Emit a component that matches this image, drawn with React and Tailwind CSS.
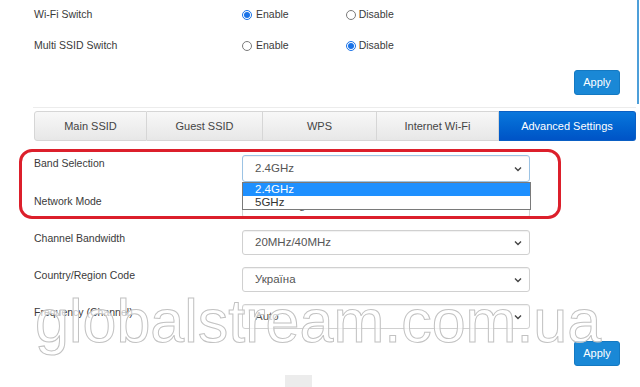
import React from "react";

function Radio({ checked }) {
  if (checked) {
    return (
      <span className="inline-flex h-[10px] w-[10px] items-center justify-center rounded-full border border-[#1a73e8] bg-white">
        <span className="h-[6px] w-[6px] rounded-full bg-[#1a73e8]" />
      </span>
    );
  }
  return <span className="inline-block h-[10px] w-[10px] rounded-full border border-[#7a7a7a] bg-white" />;
}

function Chevron() {
  return (
    <svg width="8" height="6" viewBox="0 0 8 6" className="text-[#444]">
      <polyline points="1,1.5 4,4.5 7,1.5" fill="none" stroke="currentColor" strokeWidth="1.4" />
    </svg>
  );
}

function Select({ value, focused, tall }) {
  return (
    <div
      className={
        "flex w-[288px] items-center justify-between rounded-[3px] border bg-white pl-[12px] pr-[7px] text-[11.5px] text-[#555] shadow-[inset_0_1px_1px_rgba(0,0,0,0.06)] " +
        (tall ? "h-[27px] " : "h-[25px] ") +
        (focused ? "border-[#9cc3e4]" : "border-[#d0d0d0]")
      }
    >
      <span>{value}</span>
      <Chevron />
    </div>
  );
}

function RadioRow({ label, on, h }) {
  return (
    <div className={"flex items-center " + h}>
      <div className="w-[208px] text-[10.5px] text-[#3a3a3a]">{label}</div>
      <div className="flex items-center gap-[4px] text-[10.5px] text-[#3a3a3a]">
        <Radio checked={on} />
        <span>Enable</span>
      </div>
      <div className="ml-[57px] flex items-center gap-[3px] text-[10.5px] text-[#3a3a3a]">
        <Radio checked={!on} />
        <span>Disable</span>
      </div>
    </div>
  );
}

function SelectRow({ label, value, focused, tall, h, children }) {
  return (
    <div className={"flex items-start " + h}>
      <div className="w-[208px] pt-[1px] text-[10.5px] leading-[14px] text-[#3a3a3a]">{label}</div>
      <div className="relative">
        <Select value={value} focused={focused} tall={tall} />
        {children}
      </div>
    </div>
  );
}

const tabs = [
  { name: "Main SSID", w: "w-[113px]" },
  { name: "Guest SSID", w: "w-[116px]" },
  { name: "WPS", w: "w-[114px]" },
  { name: "Internet Wi-Fi", w: "w-[122px]" },
  { name: "Advanced Settings", w: "flex-1", active: true },
];

export default function App() {
  return (
    <div className="relative h-[387px] w-[640px] overflow-hidden bg-white font-['Liberation_Sans',Arial,sans-serif]">
      <div className="absolute right-[1px] top-0 h-[104px] w-[2px] bg-[#4d9fd9]" />

      <div className="pl-[34px]">
        <RadioRow label="Wi-Fi Switch" on={true} h="h-[30px]" />
        <RadioRow label="Multi SSID Switch" on={false} h="h-[32px]" />
      </div>

      <div className="mt-[8px] flex justify-end pr-[20px]">
        <button className="h-[25px] w-[46px] rounded-[3px] border border-[#1479c2] bg-[#1a88d6] text-[11px] text-white">
          Apply
        </button>
      </div>

      <div className="ml-[33px] mr-[4px] mt-[12px] border-t border-[#ececec]" />

      <div className="ml-[34px] mr-[4px] mt-[3px] flex h-[30px]">
        {tabs.map((t, i) => (
          <div
            key={t.name}
            className={
              "flex items-center justify-center border text-[11px] " +
              t.w +
              (i === 0 ? " rounded-l-[3px]" : " border-l-0") +
              (t.active
                ? " rounded-r-[3px] border-[#0a5fc4] bg-gradient-to-b from-[#0b77dc] to-[#0053c6] text-white"
                : " border-[#d6d6d6] bg-gradient-to-b from-[#f8f8f8] to-[#e7e7e7] text-[#444]")
            }
          >
            {t.name}
          </div>
        ))}
      </div>

      <div className="mt-[14px] pl-[34px]">
        <SelectRow label="Band Selection" value="2.4GHz" focused tall h="h-[38px]">
          <div className="absolute left-0 top-[27px] z-10 w-[289px] border border-[#7a7a7a] bg-white text-[11.5px] leading-[13px]">
            <div className="bg-[#1e90ff] pl-[12px] text-white">2.4GHz</div>
            <div className="pl-[12px] text-[#333]">5GHz</div>
          </div>
        </SelectRow>
        <SelectRow label="Network Mode" value="802.11b/g/n" h="h-[37px]" />
        <SelectRow label="Channel Bandwidth" value="20MHz/40MHz" h="h-[37px]" />
        <SelectRow label="Country/Region Code" value="Україна" h="h-[37px]" />
        <SelectRow label="Frequency (Channel)" value="Auto" h="h-[37px]" />
      </div>

      <div className="flex justify-end pr-[20px]">
        <button className="h-[25px] w-[46px] rounded-[3px] border border-[#1479c2] bg-[#1a88d6] text-[11px] text-white">
          Apply
        </button>
      </div>

      <div className="ml-[285px] mt-[9px] h-[14px] w-[27px] bg-[#ececec]" />

      <div className="pointer-events-none absolute left-[19px] top-[149px] h-[70px] w-[542px] rounded-[13px] border-[3px] border-[#dc1f2b]" />

      <div className="pointer-events-none absolute left-[35px] top-[291px] text-[61px] leading-none text-[rgba(255,255,255,0.7)] [-webkit-text-stroke:1px_#c2c2c2]">
        globalstream.com.ua
      </div>
    </div>
  );
}
